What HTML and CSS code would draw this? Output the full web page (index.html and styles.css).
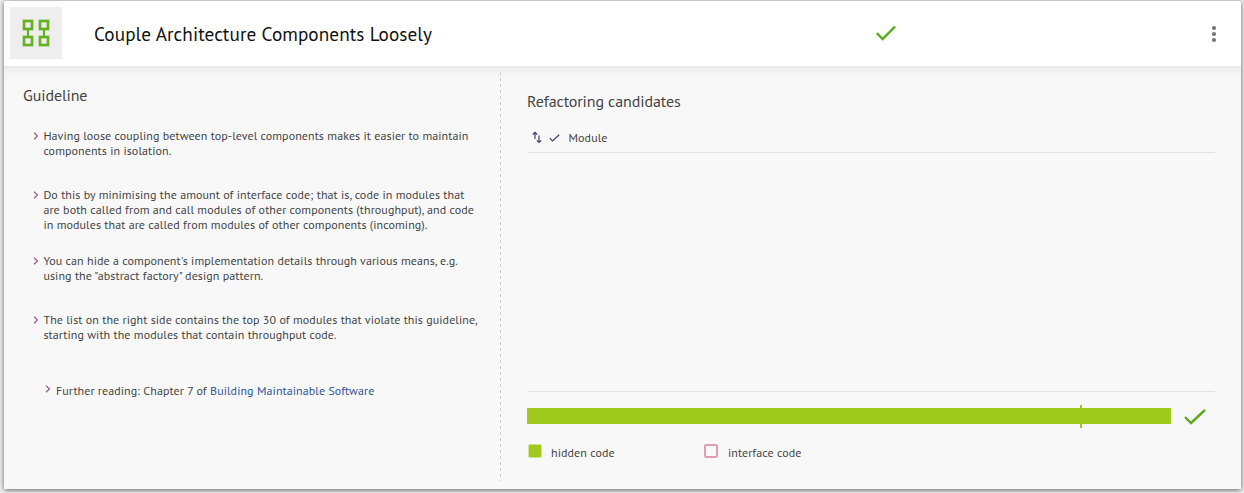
FILE: index.html
```html
<!DOCTYPE html>
<html lang="en">
<head>
<meta charset="utf-8">
<title>Couple Architecture Components Loosely</title>
<link rel="stylesheet" href="styles.css">
</head>
<body>
<main class="card">
  <header class="card-header">
    <div class="guideline-icon">
      <svg width="28" height="28" viewBox="0 0 28 28" fill="none" stroke="#66b022" stroke-width="2.7">
        <rect x="2" y="2" width="8" height="8"/><rect x="18" y="2" width="8" height="8"/>
        <rect x="2" y="18" width="8" height="8"/><rect x="18" y="18" width="8" height="8"/>
        <path d="M6 10v8M22 10v8" stroke-width="2.2"/>
      </svg>
    </div>
    <h1 class="title">Couple Architecture Components Loosely</h1>
    <svg class="status" width="20" height="16" viewBox="0 0 20 16" fill="none" stroke="#5dab1e" stroke-width="2.4"><path d="M.8 8.2 6.6 14 19 1.6"/></svg>
    <svg class="menu" width="6" height="18" viewBox="0 0 6 18" fill="#757575"><circle cx="3" cy="3" r="2.1"/><circle cx="3" cy="9" r="2.1"/><circle cx="3" cy="15" r="2.1"/></svg>
  </header>
  <div class="card-body">
    <section class="guideline">
      <h2 class="heading">Guideline</h2>
      <ul class="tips">
        <li class="tip tip-a"><svg class="chevron" viewBox="0 0 6 8"><path d="M1 .8 4.4 4 1 7.2"/></svg><p>Having loose coupling between top-level components makes it easier to maintain<br>components in isolation.</p></li>
        <li class="tip tip-b"><svg class="chevron" viewBox="0 0 6 8"><path d="M1 .8 4.4 4 1 7.2"/></svg><p>Do this by minimising the amount of interface code; that is, code in modules that<br>are both called from and call modules of other components (throughput), and code<br>in modules that are called from modules of other components (incoming).</p></li>
        <li class="tip tip-c"><svg class="chevron" viewBox="0 0 6 8"><path d="M1 .8 4.4 4 1 7.2"/></svg><p>You can hide a component's implementation details through various means, e.g.<br>using the "abstract factory" design pattern.</p></li>
        <li class="tip tip-d"><svg class="chevron" viewBox="0 0 6 8"><path d="M1 .8 4.4 4 1 7.2"/></svg><p>The list on the right side contains the top 30 of modules that violate this guideline,<br>starting with the modules that contain throughput code.</p></li>
        <li class="tip tip-e"><svg class="chevron" viewBox="0 0 6 8"><path d="M1 .8 4.4 4 1 7.2"/></svg><p>Further reading: Chapter 7 of <a class="link">Building Maintainable Software</a></p></li>
      </ul>
    </section>
    <section class="candidates">
      <h2 class="heading">Refactoring candidates</h2>
      <div class="columns">
        <svg width="10" height="13" viewBox="0 0 10 13" fill="none" stroke="#41416b" stroke-width="1.2"><path d="M3 8V1.5M.8 3.5 3 1.3l2.2 2.2M7 4.5v7M4.8 9.3 7 11.5l2.2-2.2"/></svg>
        <svg class="col-check" width="11" height="8" viewBox="0 0 11 8" fill="none" stroke="#41416b" stroke-width="1.2"><path d="M.8 4.2 3.5 6.9 10.2.7"/></svg>
        <span>Module</span>
      </div>
      <div class="rows"></div>
      <div class="meter-row">
        <div class="meter"><i class="marker"></i></div>
        <svg class="meter-check" width="22" height="16" viewBox="0 0 22 16" fill="none" stroke="#5dab1e" stroke-width="2.4"><path d="M1 8 7 14 21 1"/></svg>
      </div>
      <div class="legend">
        <span class="key"><i class="swatch hidden"></i><span class="label">hidden code</span></span>
        <span class="key"><i class="swatch interface"></i><span class="label">interface code</span></span>
      </div>
    </section>
  </div>
</main>
</body>
</html>
```
FILE: styles.css
```css
* { box-sizing: border-box; }
body { margin: 0; height: 493px; overflow: hidden; padding: 1px 3px 0 4px; background: #ededed; font-family: "PT Sans", "Noto Sans", sans-serif; font-size: 12px; letter-spacing: .09px; line-height: 15px; color: #444; }
h1, h2, p, ul { margin: 0; padding: 0; font-weight: 400; }
.card { height: 488px; background: #f8f8f8; border-radius: 2px; box-shadow: 0 1px 5px rgba(0,0,0,.6); }
.card-header { height: 65px; display: flex; align-items: center; background: #fff; padding: 0 24px 0 6px; border-radius: 2px 2px 0 0; }
.guideline-icon { width: 52px; height: 52px; margin-bottom: 1px; background: #eee; display: grid; place-items: center; }
.title { width: 782px; padding-left: 32px; font-size: 19.2px; letter-spacing: .08px; line-height: 26px; color: #111; white-space: nowrap; }
.status { margin: 0 0 2px 32px; }
.menu { margin-left: auto; }
.card-body { height: 423px; display: flex; background: linear-gradient(#e9e9e9, #f3f3f3 6px, #f8f8f8 14px); }
.guideline { width: 496px; padding: 18px 0 0 19px; }
.heading { font-size: 16px; letter-spacing: -.1px; line-height: 22px; color: #444; white-space: nowrap; }
.tips { list-style: none; padding: 22px 0 0 10px; }
.tip { display: flex; white-space: nowrap; }
.tip-a { height: 59px; }
.tip-b { height: 66px; }
.tip-c { height: 59px; }
.tip-d { height: 71px; }
.tip-e { padding-left: 13px; }
.chevron { width: 6px; height: 8px; margin: 4px 4.4px 0 0; fill: none; stroke: #a0608a; stroke-width: 1.3; flex: none; }
.tip-e .chevron { margin: 2px 5px 0 -1px; }
.link { color: #2f5597; }
.candidates { flex: 1; margin: 6px 26px 8px 0; padding: 18px 0 0 27px; background: repeating-linear-gradient(#ccc 0 3px, transparent 3px 6px) left top / 1px 100% no-repeat; }
.columns { height: 30px; display: flex; align-items: center; padding-left: 4.5px; margin-top: 11px; border-bottom: 1px solid #e0e0e0; }
.col-check { margin: 0 9px 0 7px; }
.rows { height: 239px; border-bottom: 1px solid #e0e0e0; }
.meter-row { display: flex; align-items: flex-start; padding-top: 16px; height: 52px; gap: 13px; }
.meter { width: 644px; height: 16px; background: #9fc91c; position: relative; }
.marker { position: absolute; left: 553px; top: -3px; width: 2px; height: 23px; background: #9fc91c; }
.meter-check { margin-top: 1px; }
.legend { display: flex; padding-left: 1px; }
.key { display: flex; width: 176px; gap: 9px; }
.label { padding-top: 1px; }
.swatch { width: 14px; height: 14px; border-radius: 2px; border: 1px solid #cfe48e; background: #9fc91c; }
.interface { background: none; border: 2px solid #dea0b0; margin-right: 1px; }
```
